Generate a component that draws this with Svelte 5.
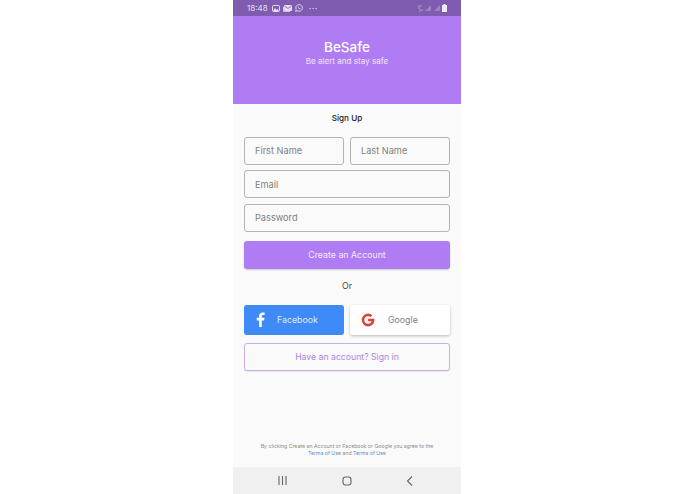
<script>
  const fields = ['Email', 'Password'];
</script>

<div class="page">
  <main class="phone">
    <div class="status">
      <div class="status-left">
        <span class="time">18:48</span>
        <svg width="8" height="7" viewBox="0 0 8 7"><rect x=".5" y=".5" width="7" height="6" rx="1" fill="none" stroke="#e6dcf3"/><path d="M1 6l2-3 1.500 2 1-1L7 6z" fill="#e6dcf3"/></svg>
        <svg width="9" height="7" viewBox="0 0 9 7"><rect x="1" width="8" height="6" rx="1" fill="#e6dcf3"/><path d="M.5 1.500V6.500H7" fill="none" stroke="#e6dcf3" stroke-width=".8"/><path d="M1.500 1l3.500 2.500L8.500 1" fill="none" stroke="#7f5cb0" stroke-width=".8"/></svg>
        <svg width="8" height="8" viewBox="0 0 8 8"><path d="M.6 7.400l.6-1.900A3.300 3.300 0 1 1 2.500 6.800z" fill="none" stroke="#e6dcf3" stroke-width=".9"/><path d="M2.900 2.500c-.3 1.400 1 2.800 2.500 2.700l.3-.8-.9-.4-.4.400c-.4-.2-.8-.6-1-1l.4-.4-.4-.9z" fill="#e6dcf3"/></svg>
        <span class="dots">···</span>
      </div>
      <div class="status-right">
        <svg width="5" height="7" viewBox="0 0 5 7"><path d="M0 1h4M0 3h2M1 5h4M1 7h2" stroke="#b09ad2" stroke-width="1"/></svg>
        <svg width="6" height="6" viewBox="0 0 6 6"><path d="M0 6L6 0v6z" fill="#9c80c4"/></svg>
        <svg width="6" height="6" viewBox="0 0 6 6"><path d="M0 6L6 0v6z" fill="#9c80c4"/></svg>
        <svg width="5" height="8" viewBox="0 0 5 8"><path d="M1.500 0h2v1H5v7H0V1h1.500z" fill="#f1ebf8"/></svg>
      </div>
    </div>

    <header class="hero">
      <h1>BeSafe</h1>
      <p>Be alert and stay safe</p>
    </header>

    <section class="form">
      <h2>Sign Up</h2>
      <div class="row">
        <div class="field">First Name</div>
        <div class="field">Last Name</div>
      </div>
      {#each fields as field}
        <div class="field">{field}</div>
      {/each}
      <button class="create">Create an Account</button>
      <div class="or">Or</div>
      <div class="row social-row">
        <button class="social facebook">
          <svg width="9" height="15" viewBox="0 0 9 15"><path d="M5.800 15V8.500h2.300l.4-2.700H5.800V4.300c0-.8.3-1.300 1.400-1.300h1.400V.6C8.300.5 7.500.4 6.600.4 4.500.4 3.100 1.700 3.100 4v1.800H.7v2.700h2.400V15z" fill="#fff"/></svg>
          <span>Facebook</span>
        </button>
        <button class="social google">
          <svg width="14" height="14" viewBox="0 0 14 14"><path d="M7.100 5.800v2.500h3.500c-.4 1.500-1.700 2.500-3.500 2.500A3.800 3.800 0 0 1 7.100 3.200c1 0 1.800.3 2.500.9l1.800-1.800A6.400 6.400 0 0 0 7.100.6a6.400 6.400 0 1 0 0 12.800c3.700 0 6.300-2.600 6.300-6.300 0-.5 0-.9-.1-1.300z" fill="#d8443a"/></svg>
          <span>Google</span>
        </button>
      </div>
      <button class="signin">Have an account? Sign in</button>

      <p class="terms">
        By clicking Create an Account or Facebook or Google you agree to the<br />
        <span class="link">Terms of Use</span> and <span class="link">Terms of Use</span>
      </p>
    </section>

    <nav class="nav">
      <svg width="9" height="9" viewBox="0 0 9 9"><path d="M1 0v9M4.500 0v9M8 0v9" stroke="#666" stroke-width="1.100"/></svg>
      <svg width="10" height="10" viewBox="0 0 10 10"><rect x="1" y="1" width="8" height="8" rx="2.500" fill="none" stroke="#666" stroke-width="1.100"/></svg>
      <svg width="7" height="10" viewBox="0 0 7 10"><path d="M6 .5L1.500 5 6 9.500" fill="none" stroke="#666" stroke-width="1.100"/></svg>
    </nav>
  </main>
</div>

<style>
  :global(body) {
    margin: 0;
    background: #fff;
    font-family: Inter, "Open Sans", sans-serif;
  }

  .page {
    display: flex;
    justify-content: center;
    height: 494px;
    padding-right: 1px;
  }

  .phone {
    width: 228px;
    height: 494px;
    display: flex;
    flex-direction: column;
    background: #fafafa;
  }

  .status {
    height: 16px;
    flex: none;
    display: flex;
    justify-content: space-between;
    align-items: center;
    padding: 0 14px 0 14px;
    background: #7f5cb0;
  }

  .status-left, .status-right {
    display: flex;
    align-items: center;
    gap: 3px;
  }

  .status-right {
    gap: 2.500px;
  }

  .time {
    font-size: 8px;
    color: #e6dcf3;
    margin-right: 1px;
  }

  .dots {
    font-size: 9px;
    line-height: 1;
    color: #e6dcf3;
    margin-left: 3px;
    letter-spacing: 0.5px;
  }

  .hero {
    height: 88px;
    flex: none;
    box-sizing: border-box;
    padding-top: 22px;
    background: #b07cf3;
    color: #fff;
    text-align: center;
  }

  h1 {
    margin: 0;
    font-size: 13.500px;
    line-height: 18px;
    font-weight: 500;
  }

  .hero p {
    margin: 0;
    font-size: 8.100px;
    line-height: 11px;
    color: #f0e4fd;
  }

  .form {
    flex: 1;
    display: flex;
    flex-direction: column;
    gap: 5.500px;
    padding: 0 11px;
    position: relative;
  }

  h2 {
    margin: 8px 0 7px;
    font-size: 8.200px;
    line-height: 12px;
    font-weight: 500;
    color: #222;
    text-align: center;
  }

  .row {
    display: flex;
    gap: 6px;
  }

  .row > * {
    flex: 1 1 100px;
  }

  .field {
    height: 28px;
    box-sizing: border-box;
    padding-left: 10px;
    display: flex;
    align-items: center;
    border: 1px solid #b4b4b4;
    border-radius: 3px;
    font-size: 9.200px;
    color: #808080;
  }

  button {
    font-family: inherit;
    border-radius: 3px;
    padding: 0;
    cursor: pointer;
  }

  .create {
    margin-top: 3.500px;
    height: 28.500px;
    border: none;
    background: #b07cf3;
    color: #f3eafd;
    font-size: 8.800px;
    box-shadow: 0 1px 2px rgba(0, 0, 0, 0.2);
  }

  .or {
    margin-top: 5px;
    text-align: center;
    font-size: 8.800px;
    line-height: 12px;
    color: #444;
  }

  .social-row {
    margin-top: 7.500px;
  }

  .social {
    height: 30px;
    border: none;
    display: flex;
    align-items: center;
    font-size: 8.800px;
  }

  .facebook {
    padding-left: 12px;
    gap: 12px;
    background: #3e8bf8;
    color: #dfeafd;
  }

  .google {
    padding-left: 11px;
    gap: 13px;
    background: #fff;
    color: #808080;
    box-shadow: 0 1px 3px rgba(0, 0, 0, 0.25);
  }

  .signin {
    margin-top: 2.500px;
    height: 28.500px;
    background: #fafafa;
    border: 1px solid #c9aee6;
    color: #ad85dc;
    font-size: 8.700px;
    box-shadow: 0 1px 1px rgba(0, 0, 0, 0.08);
  }

  .terms {
    position: absolute;
    left: 0;
    right: 0;
    top: 339px;
    margin: 0;
    text-align: center;
    font-size: 5.200px;
    line-height: 7px;
    color: #8a8a8a;
  }

  .link {
    color: #5b8fc0;
  }

  .nav {
    height: 27px;
    flex: none;
    display: flex;
    align-items: center;
    justify-content: space-between;
    padding: 0 48px 0 45px;
    background: #f0f0f0;
  }
</style>
